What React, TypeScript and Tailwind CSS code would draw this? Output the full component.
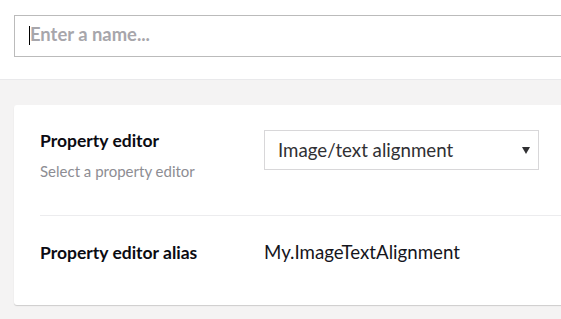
import React from 'react';

export default function App() {
  return (
    <div className="w-[561px] h-[319px] overflow-hidden bg-[#f4f3f3] font-['Lato','Open_Sans',sans-serif]">
      {/* Header with name input */}
      <header className="h-[80px] bg-white border-b border-[#e9e9eb] pt-[15px] pl-[14px]">
        <div className="relative w-[620px] h-[42px] border border-[#bbbbbb] bg-white">
          <input
            className="w-full h-full pl-[15px] pb-[4px] text-[18.4px] font-bold text-[#111118] placeholder:text-[#a7a6ab] outline-none bg-transparent"
            placeholder="Enter a name..."
          />
          <span className="absolute left-[14px] top-[10px] w-px h-[19px] bg-black" />
        </div>
      </header>

      {/* Card */}
      <div className="ml-[14px] mt-[25px] w-[620px] bg-white rounded-[3px] shadow-[0_1px_1px_rgba(0,0,0,0.16)]">
        <div className="ml-[26px]">
          <div className="flex pt-[25px] pb-[34px] border-b border-[#ececee]">
            <div className="w-[224px]">
              <div className="text-[17.5px] font-bold text-[#0b0b12] leading-[22px]">Property editor</div>
              <div className="mt-[9px] text-[15px] text-[#8d8d93] leading-[20px]">Select a property editor</div>
            </div>
            <div className="relative w-[275px] h-[40px] border border-[#d8d7d9] bg-white flex items-center pl-[13px]">
              <span className="text-[18.7px] text-[#303033]">Image/text alignment</span>
              <span className="absolute right-[8px] top-[16px] w-0 h-0 border-l-[4px] border-r-[4px] border-t-[7px] border-l-transparent border-r-transparent border-t-[#303033]" />
            </div>
          </div>
          <div className="flex items-baseline pt-[25px] pb-[41px]">
            <div className="w-[224px] text-[17.5px] font-bold text-[#0b0b12] leading-[22px]">Property editor alias</div>
            <div className="text-[18.7px] text-[#15151c] leading-[22px]">My.ImageTextAlignment</div>
          </div>
        </div>
      </div>
    </div>
  );
}
